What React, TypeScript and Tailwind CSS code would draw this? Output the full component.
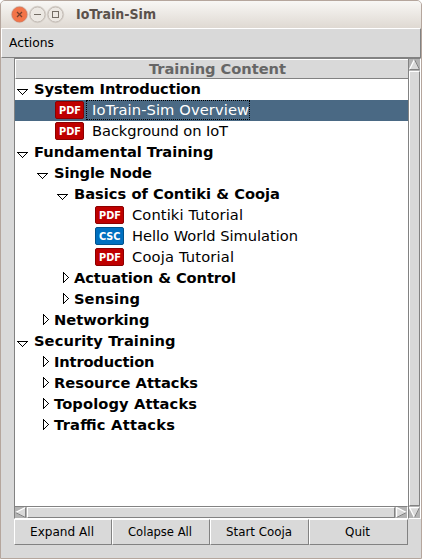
import React from "react";

type Item = { label: string; level: number; kind: "open" | "closed" | "PDF" | "CSC"; selected?: boolean; width: number };

const items: Item[] = [
  { label: "System Introduction", level: 0, kind: "open", width: 167 },
  { label: "IoTrain-Sim Overview", level: 1, kind: "PDF", selected: true, width: 157 },
  { label: "Background on IoT", level: 1, kind: "PDF", width: 136 },
  { label: "Fundamental Training", level: 0, kind: "open", width: 179.5 },
  { label: "Single Node", level: 1, kind: "open", width: 98 },
  { label: "Basics of Contiki & Cooja", level: 2, kind: "open", width: 206 },
  { label: "Contiki Tutorial", level: 3, kind: "PDF", width: 111 },
  { label: "Hello World Simulation", level: 3, kind: "CSC", width: 166 },
  { label: "Cooja Tutorial", level: 3, kind: "PDF", width: 102 },
  { label: "Actuation & Control", level: 2, kind: "closed", width: 162 },
  { label: "Sensing", level: 2, kind: "closed", width: 66 },
  { label: "Networking", level: 1, kind: "closed", width: 95.5 },
  { label: "Security Training", level: 0, kind: "open", width: 141.5 },
  { label: "Introduction", level: 1, kind: "closed", width: 100.5 },
  { label: "Resource Attacks", level: 1, kind: "closed", width: 144 },
  { label: "Topology Attacks", level: 1, kind: "closed", width: 143 },
  { label: "Traffic Attacks", level: 1, kind: "closed", width: 121 },
];

const indents = ["pl-0", "pl-[20px]", "pl-[40px]", "pl-[60px]"];

const px = (x: number, y: number) => `M${x} ${y}h1v1h-1z`;
const steps = Array.from({ length: 11 }, (_, i) => i);
const fold = (i: number) => (i <= 5 ? i : 10 - i);
const openShape = "M2 10h11v1h-11z" + steps.map((i) => px(2 + i, 10 + fold(i))).join("");
const closedShape = "M8 4h1v11h-1z" + steps.map((i) => px(8 + fold(i), 4 + i)).join("");

function Expander({ open }: { open: boolean }) {
  return (
    <svg width="19" height="21" className="shrink-0" fill="#000" shapeRendering="crispEdges">
      <path d={open ? openShape : closedShape} fillRule="nonzero" />
    </svg>
  );
}

function Badge({ kind }: { kind: "PDF" | "CSC" }) {
  const color = kind === "PDF" ? "bg-[#bf0000] border-[#8c0000]" : "bg-[#0070c0] border-[#00528c]";
  const length = kind === "PDF" ? 22 : 21.5;
  return (
    <span className={`flex h-[18px] w-[29px] shrink-0 items-center justify-center rounded-[2px] border text-white ${color}`}>
      <svg width={length} height="16" className="overflow-visible">
        <text x="0" y="12" fill="currentColor" textLength={length} lengthAdjust="spacingAndGlyphs" className="font-['DejaVu_Sans_Condensed','DejaVu_Sans',sans-serif] text-[11px] font-bold">{kind}</text>
      </svg>
    </span>
  );
}

function Row({ item }: { item: Item }) {
  const leaf = item.kind === "PDF" || item.kind === "CSC";
  return (
    <div className={`flex h-[21px] ${item.selected ? "bg-[#4a6984]" : ""}`}>
      <div className={`flex h-[21px] ${indents[item.level]}`}>
        {item.kind === "PDF" || item.kind === "CSC" ? (
          <div className="flex w-[57px] shrink-0 pt-px pl-[20px]">
            <Badge kind={item.kind} />
          </div>
        ) : (
          <Expander open={item.kind === "open"} />
        )}
        <div className={`relative h-[21px] ${leaf ? "font-normal" : "font-bold"} ${item.selected ? "text-white" : "text-black"}`}>
          <svg width={item.width} height="21" className="block overflow-visible">
            <text x="0" y="15" fill="currentColor" textLength={item.width} className="text-[14.67px]">{item.label}</text>
          </svg>
          {item.selected && <span className="absolute top-0 -left-[6px] h-5 w-[164px] border border-dotted border-black" />}
        </div>
      </div>
    </div>
  );
}

function Arrow({ dir }: { dir: "up" | "down" | "left" | "right" }) {
  return (
    <svg width="11" height="11" className="block shrink-0" fill="none">
      {dir === "up" && <><path d="M5.5 0L0 11H11Z" fill="#d9d9d9" /><path d="M.5 10.5L5.5 .5" stroke="#fff" strokeWidth="1.3" /><path d="M5.5 .5L10.5 10.5H.5" stroke="#828282" /></>}
      {dir === "down" && <><path d="M0 0H11L5.5 11Z" fill="#d9d9d9" /><path d="M10.5 .5H.5L5.5 10.5" stroke="#fff" strokeWidth="1.3" /><path d="M10.5 .5L5.5 10.5" stroke="#828282" /></>}
      {dir === "left" && <><path d="M0 5.5L11 0V11Z" fill="#d9d9d9" /><path d="M.5 5.5L10.5 .5" stroke="#fff" strokeWidth="1.3" /><path d="M.5 5.5L10.5 10.5V.5" stroke="#828282" /></>}
      {dir === "right" && <><path d="M11 5.5L0 0V11Z" fill="#d9d9d9" /><path d="M10.5 5.5L.5 .5V10.5" stroke="#fff" strokeWidth="1.3" /><path d="M.5 10.5L10.5 5.5" stroke="#828282" /></>}
    </svg>
  );
}

const raised = "border border-t-white border-l-white border-b-[#828282] border-r-[#828282]";
const sunken = "border border-t-[#828282] border-l-[#828282] border-b-white border-r-white";

function WindowButton({ kind }: { kind: "close" | "min" | "max" }) {
  return (
    <svg width="18" height="18" viewBox="0 0 18 18" fill="none" className="overflow-visible">
      <circle cx="9.5" cy="9.5" r="8.3" fill="#e3ded9" stroke="#d3cdc6" strokeWidth=".7" />
      <circle cx="9.5" cy="9.5" r="7.5" fill={kind === "close" ? "#f37448" : "#ece8e3"} stroke={kind === "close" ? "#d77354" : "#bdb6af"} strokeWidth=".9" />
      {kind === "close" && <path d="M7 7L12 12M12 7L7 12" stroke="#77402d" strokeWidth="1.3" />}
      {kind === "min" && <path d="M6 9.5H13" stroke="#746d65" />}
      {kind === "max" && <rect x="6.5" y="6.5" width="6" height="6" stroke="#746d65" />}
    </svg>
  );
}

export default function App() {
  return (
    <div className="h-[559px] w-[422px] overflow-hidden bg-white font-['DejaVu_Sans',sans-serif] text-black">
      <div className="flex h-full flex-col rounded-t-[5px] border border-[#b5a69d] bg-[#d9d9d9]">
        <header className="flex h-[27px] shrink-0 rounded-t-[4px] bg-linear-to-b from-[#f8f7f5] to-[#dfd9d2] pt-1 pl-[9px]">
          <div className="flex">
            <WindowButton kind="close" /><WindowButton kind="min" /><WindowButton kind="max" />
          </div>
          <svg width="90" height="20" className="ml-[12px]">
            <text x="0" y="14" textLength="80" lengthAdjust="spacingAndGlyphs" fill="#5b514b" className="font-['DejaVu_Sans_Condensed','DejaVu_Sans',sans-serif] text-[13.33px] font-bold">IoTrain-Sim</text>
          </svg>
        </header>
        <nav className={`h-[30px] shrink-0 pl-[7px] ${raised}`}>
          <svg width="50" height="27"><text x="0" y="18" textLength="45" lengthAdjust="spacingAndGlyphs" className="font-['DejaVu_Sans_Condensed','DejaVu_Sans',sans-serif] text-[12px]">Actions</text></svg>
        </nav>
        <main className="ml-[13px] flex h-[461px] shrink-0">
          <div className="flex w-[394px] flex-col">
            <section className="h-[448px] border-t border-l border-[#828282] bg-white">
              <div className="h-5 border-t border-l border-b border-t-white border-l-white border-b-[#828282] bg-[#d9d9d9] pl-[132px] text-[#666]">
                <svg width="150" height="18"><text x="1" y="14" textLength="137" fill="currentColor" className="text-[14.67px] font-bold">Training Content</text></svg>
              </div>
              {items.map((item) => <Row key={item.label} item={item} />)}
            </section>
            <div className={`flex h-[13px] gap-px bg-[#b3b3b3] ${sunken}`}>
              <Arrow dir="left" /><div className={`flex-1 bg-[#d9d9d9] ${raised}`} /><Arrow dir="right" />
            </div>
          </div>
          <div className={`flex w-[13px] flex-col gap-px bg-[#b3b3b3] ${sunken}`}>
            <Arrow dir="up" /><div className={`flex-1 bg-[#d9d9d9] ${raised}`} /><Arrow dir="down" />
          </div>
        </main>
        <div className="ml-[13px] flex h-[26px] shrink-0">
          {["Expand All", "Colapse All", "Start Cooja", "Quit"].map((label, i) => (
            <button key={label} className={`${i > 1 ? "w-[99px]" : "w-[98px]"} ${raised} flex items-center justify-center pr-[2px]`}>
              <svg width={[64, 64, 66, 25][i]} height="24" className="overflow-visible"><text x="0" y="16" textLength={[64, 64, 66, 25][i]} lengthAdjust="spacingAndGlyphs" className="font-['DejaVu_Sans_Condensed','DejaVu_Sans',sans-serif] text-[12px]">{label}</text></svg>
            </button>
          ))}
        </div>
      </div>
    </div>
  );
}
